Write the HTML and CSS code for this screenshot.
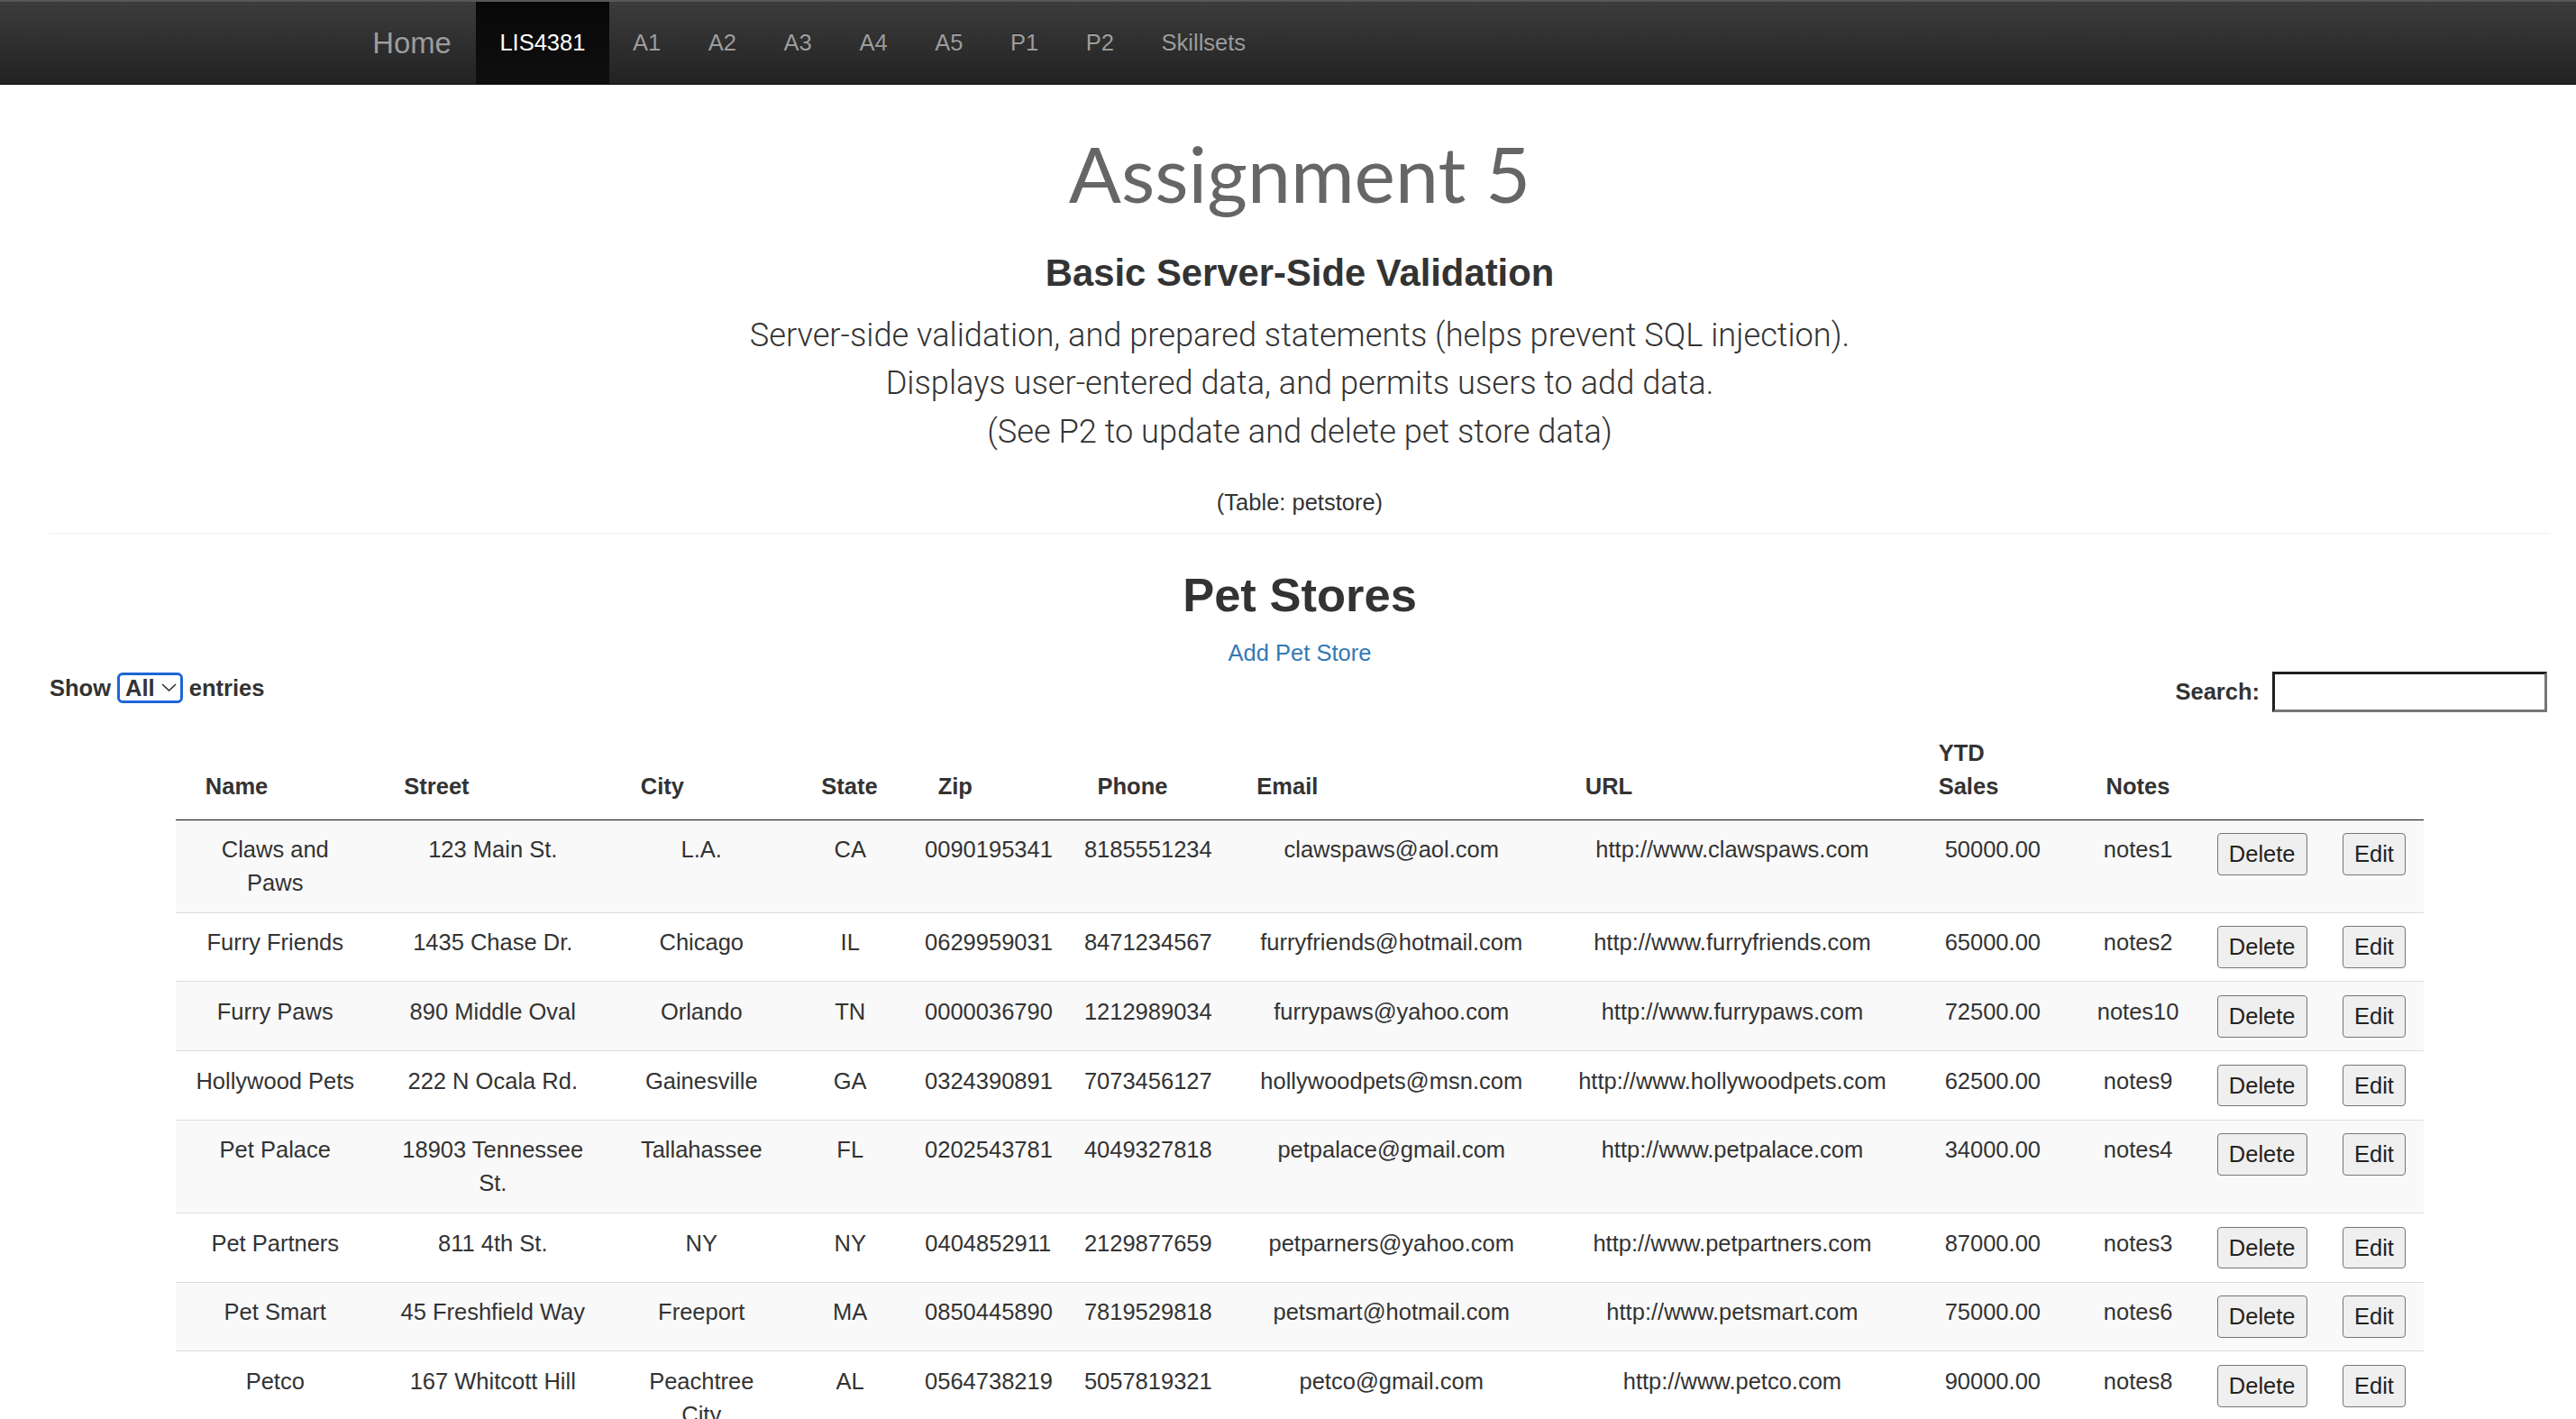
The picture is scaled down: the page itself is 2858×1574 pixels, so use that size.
FILE: index.html
```html
<!DOCTYPE html>
<html lang="en">
<head>
<meta charset="utf-8">
<title>LIS4381 - Assignment 5</title>
<link rel="stylesheet" href="styles.css">
</head>
<body>
<nav class="navbar">
  <a class="brand" href="#">Home</a>
  <ul class="nav">
    <li class="active"><a href="#">LIS4381</a></li>
    <li><a href="#">A1</a></li>
    <li><a href="#">A2</a></li>
    <li><a href="#">A3</a></li>
    <li><a href="#">A4</a></li>
    <li><a href="#">A5</a></li>
    <li><a href="#">P1</a></li>
    <li><a href="#">P2</a></li>
    <li><a href="#">Skillsets</a></li>
  </ul>
</nav>

<main class="main">
  <header class="page-head">
    <h1 class="title">Assignment 5</h1>
    <h3 class="subtitle">Basic Server-Side Validation</h3>
    <p class="lead">Server-side validation, and prepared statements (helps prevent SQL injection).<br>Displays user-entered data, and permits users to add data.<br>(See P2 to update and delete pet store data)</p>
    <p class="table-note">(Table: petstore)</p>
  </header>

  <hr class="rule">

  <section class="stores">
    <h2 class="stores-title">Pet Stores</h2>
    <p class="add-wrap"><a class="add-link" href="#">Add Pet Store</a></p>

    <div class="dt-controls">
      <label class="dt-length">Show <span class="select-box">All <svg class="chev" width="17" height="9" viewBox="0 0 17 9"><path d="M1 1 L8.5 8 L16 1" fill="none" stroke="#333" stroke-width="1.6"/></svg></span> entries</label>
      <label class="dt-search">Search: <input class="search-input" type="search"></label>
    </div>

    <table class="dt">
      <colgroup>
        <col class="c-name"><col class="c-street"><col class="c-city"><col class="c-state"><col class="c-zip"><col class="c-phone"><col class="c-email"><col class="c-url"><col class="c-ytd"><col class="c-notes"><col class="c-del"><col class="c-edit">
      </colgroup>
      <thead>
        <tr>
          <th>Name</th><th>Street</th><th>City</th><th>State</th><th>Zip</th><th>Phone</th><th>Email</th><th>URL</th><th>YTD Sales</th><th>Notes</th><th></th><th></th>
        </tr>
      </thead>
      <tbody>
        <tr>
          <td>Claws and Paws</td><td>123 Main St.</td><td>L.A.</td><td>CA</td><td>0090195341</td><td>8185551234</td><td>clawspaws@aol.com</td><td>http://www.clawspaws.com</td><td>50000.00</td><td>notes1</td>
          <td><button class="btn">Delete</button></td><td><button class="btn">Edit</button></td>
        </tr>
        <tr>
          <td>Furry Friends</td><td>1435 Chase Dr.</td><td>Chicago</td><td>IL</td><td>0629959031</td><td>8471234567</td><td>furryfriends@hotmail.com</td><td>http://www.furryfriends.com</td><td>65000.00</td><td>notes2</td>
          <td><button class="btn">Delete</button></td><td><button class="btn">Edit</button></td>
        </tr>
        <tr>
          <td>Furry Paws</td><td>890 Middle Oval</td><td>Orlando</td><td>TN</td><td>0000036790</td><td>1212989034</td><td>furrypaws@yahoo.com</td><td>http://www.furrypaws.com</td><td>72500.00</td><td>notes10</td>
          <td><button class="btn">Delete</button></td><td><button class="btn">Edit</button></td>
        </tr>
        <tr>
          <td>Hollywood Pets</td><td>222 N Ocala Rd.</td><td>Gainesville</td><td>GA</td><td>0324390891</td><td>7073456127</td><td>hollywoodpets@msn.com</td><td>http://www.hollywoodpets.com</td><td>62500.00</td><td>notes9</td>
          <td><button class="btn">Delete</button></td><td><button class="btn">Edit</button></td>
        </tr>
        <tr>
          <td>Pet Palace</td><td>18903 Tennessee St.</td><td>Tallahassee</td><td>FL</td><td>0202543781</td><td>4049327818</td><td>petpalace@gmail.com</td><td>http://www.petpalace.com</td><td>34000.00</td><td>notes4</td>
          <td><button class="btn">Delete</button></td><td><button class="btn">Edit</button></td>
        </tr>
        <tr>
          <td>Pet Partners</td><td>811 4th St.</td><td>NY</td><td>NY</td><td>0404852911</td><td>2129877659</td><td>petparners@yahoo.com</td><td>http://www.petpartners.com</td><td>87000.00</td><td>notes3</td>
          <td><button class="btn">Delete</button></td><td><button class="btn">Edit</button></td>
        </tr>
        <tr>
          <td>Pet Smart</td><td>45 Freshfield Way</td><td>Freeport</td><td>MA</td><td>0850445890</td><td>7819529818</td><td>petsmart@hotmail.com</td><td>http://www.petsmart.com</td><td>75000.00</td><td>notes6</td>
          <td><button class="btn">Delete</button></td><td><button class="btn">Edit</button></td>
        </tr>
        <tr>
          <td>Petco</td><td>167 Whitcott Hill</td><td>Peachtree City</td><td>AL</td><td>0564738219</td><td>5057819321</td><td>petco@gmail.com</td><td>http://www.petco.com</td><td>90000.00</td><td>notes8</td>
          <td><button class="btn">Delete</button></td><td><button class="btn">Edit</button></td>
        </tr>
      </tbody>
    </table>
  </section>
</main>
</body>
</html>
```

FILE: styles.css
```css
html {
  scrollbar-width: none;
}

body {
  margin: 0;
  font-family: "Liberation Sans", Arial, Helvetica, sans-serif;
  font-size: 25.5px;
  line-height: 36.5px;
  color: #333;
  background: #fff;
}

/* ---------- navbar ---------- */
.navbar {
  display: flex;
  align-items: stretch;
  height: 91px;
  padding-left: 386px;
  background: linear-gradient(to bottom, #3c3c3c 0%, #222 100%);
  border-top: 2px solid #575757;
  border-bottom: 1px solid #080808;
}

.brand {
  padding: 0 27.3px;
  font-size: 32.8px;
  line-height: 91px;
  color: #9d9d9d;
  text-decoration: none;
  text-shadow: 0 -1px 0 rgba(0, 0, 0, .25);
}

.nav {
  display: flex;
  margin: 0;
  padding: 0;
  list-style: none;
}

.nav a {
  display: block;
  padding: 0 26.3px;
  font-size: 25.5px;
  line-height: 91px;
  color: #9d9d9d;
  text-decoration: none;
  text-shadow: 0 -1px 0 rgba(0, 0, 0, .25);
}

.nav .active a {
  color: #fff;
  background: linear-gradient(to bottom, #080808 0%, #0f0f0f 100%);
}

/* ---------- main ---------- */
.main {
  padding: 0 29px 0 55px;
}

.page-head {
  text-align: center;
}

.title {
  margin: 48px 0 0;
  font-family: Lato, "Open Sans", sans-serif;
  font-weight: 400;
  font-size: 86px;
  line-height: 100px;
  color: #666;
}

.subtitle {
  margin: 35.5px 0 0;
  font-size: 41.8px;
  line-height: 50px;
  font-weight: 700;
  color: #333;
}

.lead {
  margin: 17.4px 0 0;
  font-family: Roboto, "Liberation Sans", sans-serif;
  font-weight: 300;
  font-size: 36.2px;
  line-height: 53.6px;
  color: #333;
}

.table-note {
  margin: 33px 0 0;
}

.rule {
  margin: 16.2px 0 0;
  border: 0;
  border-top: 1px solid #eee;
}

/* ---------- pet stores ---------- */
.stores-title {
  margin: 37.2px 0 0;
  font-size: 52.5px;
  line-height: 60px;
  font-weight: 700;
  text-align: center;
  color: #333;
}

.add-wrap {
  margin: 16.8px 0 0;
  text-align: center;
}

.add-link {
  color: #337ab7;
  text-decoration: none;
}

.dt-controls {
  display: flex;
  justify-content: space-between;
  align-items: flex-start;
  margin-top: 1.8px;
}

.dt-length {
  font-weight: 700;
}

.select-box {
  display: inline-flex;
  align-items: center;
  vertical-align: top;
  box-sizing: border-box;
  height: 34px;
  margin-top: 1px;
  padding: 0 4px 0 6px;
  border: 3px solid #1f65d6;
  border-radius: 6px;
  line-height: 28px;
}

.chev {
  margin-left: 7px;
}

.dt-search {
  display: flex;
  align-items: center;
  font-weight: 700;
}

.search-input {
  box-sizing: border-box;
  width: 305px;
  height: 45px;
  margin: 0 3px 0 14px;
  padding: 0 6px;
  border-width: 3px;
  border-style: solid;
  border-color: #1f1f1f #767676 #767676 #1f1f1f;
  background: #fff;
  font: inherit;
}

/* ---------- table ---------- */
.dt {
  width: 2494px;
  margin: 9.6px auto 0;
  table-layout: fixed;
  border-collapse: separate;
  border-spacing: 0;
}

.c-name { width: 220.5px; }
.c-street { width: 262.5px; }
.c-city { width: 200.5px; }
.c-state { width: 129.4px; }
.c-zip { width: 176.8px; }
.c-phone { width: 176.8px; }
.c-email { width: 364.5px; }
.c-url { width: 391.9px; }
.c-ytd { width: 185.9px; }
.c-notes { width: 136.7px; }
.c-del { width: 138.5px; }
.c-edit { width: 110px; }

.dt th {
  padding: 18.2px 32.8px;
  text-align: left;
  vertical-align: bottom;
  font-weight: 700;
  border-bottom: 1px solid #111;
}

.dt td {
  padding: 14.6px 18.2px;
  text-align: center;
  vertical-align: top;
  border-top: 1px solid #ddd;
}

.dt tbody tr:first-child td {
  border-top: 0;
}

.dt tbody tr:nth-child(odd) {
  background: #f9f9f9;
}

.btn {
  margin: 0;
  padding: 4px 12px;
  font: inherit;
  line-height: 36.5px;
  color: #222;
  background: #efefef;
  border: 1px solid #767676;
  border-radius: 4px;
}
```
